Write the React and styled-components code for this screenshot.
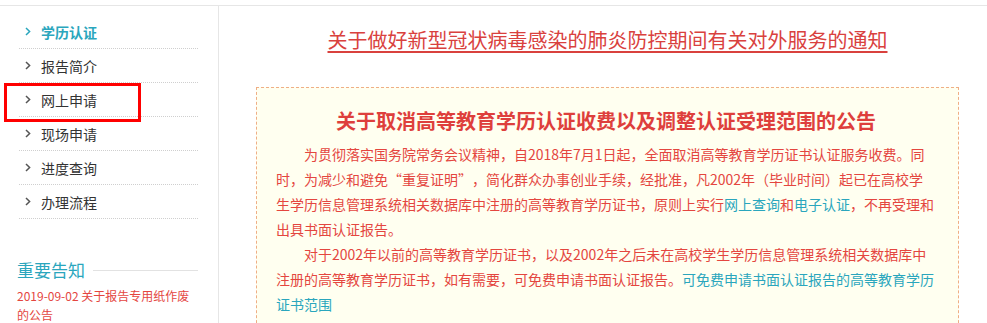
import React from 'react'
import styled, { createGlobalStyle } from 'styled-components'

const GlobalStyle = createGlobalStyle`
  body {
    margin: 0;
    background: #fff;
    font-family: "Noto Sans CJK SC", "Noto Sans", sans-serif;
    text-spacing-trim: space-all;
  }
`

let Page = styled.div`
  margin-top: 5px;
  border-top: 1px solid #e6e6e6;
  display: flex;
  height: 317px;
  overflow: hidden;
`

let Sidebar = styled.aside`
  width: 219px;
  flex-shrink: 0;
  border-right: 1px solid #e6e6e6;
  padding: 9px 20px 0 19px;
  box-sizing: border-box;
`

let NavList = styled.ul`
  list-style: none;
  margin: 0;
  padding: 0;
`

let NavItem = styled.li`
  position: relative;
  height: 34px;
  border-bottom: 1px dotted #cfcfcf;
  box-sizing: border-box;
  display: flex;
  align-items: center;
  gap: 10px;
  padding-left: 6px;
  font-size: 14px;
  color: ${(p) => (p.active ? '#2aa6bd' : '#333')};
  font-weight: ${(p) => (p.active ? 'bold' : 'normal')};
`

let Marker = styled.span`
  position: absolute;
  left: -15px;
  top: 0;
  width: 137px;
  height: 39px;
  border: 3px solid #f00;
  box-sizing: border-box;
  pointer-events: none;
`

let NoticeHead = styled.div`
  margin: 38px 0 0 -2px;
  display: flex;
  align-items: center;
  gap: 8px;
  font-size: 17px;
  line-height: 26px;
  color: #2aa6bd;

  &:after {
    content: '';
    flex: 1;
    height: 1px;
    background: #e2e2e2;
  }
`

let NoticeLink = styled.a`
  display: block;
  margin: 3px 0 0 -2px;
  width: 184px;
  font-size: 12px;
  line-height: 19px;
  color: #e4463f;
  text-decoration: none;
`

let Main = styled.main`
  flex: 1;
  padding: 19px 28px 0 37px;
`

let Title = styled.a`
  display: block;
  text-align: center;
  font-size: 20px;
  line-height: 30px;
  color: #d9413e;
  text-decoration: underline;
  text-underline-offset: 3px;
`

let Notice = styled.section`
  margin-top: 32px;
  border: 1px dashed #efae85;
  background: #fffff0;
  padding: 18px 22px 20px 19px;
`

let NoticeTitle = styled.h2`
  margin: 0;
  text-align: center;
  font-size: 20px;
  line-height: 30px;
  font-weight: bold;
  color: #de3f3c;
`

let Body = styled.div`
  margin-top: 6px;
`

let Para = styled.p`
  margin: 0;
  text-indent: 28px;
  font-size: 14px;
  line-height: 25px;
  color: #e4463f;

  a {
    color: #2aa6bd;
    text-decoration: none;
  }
`

// full-width curly quotes, as the reference font draws them
let Quote = styled.span`
  display: inline-block;
  width: 1em;
  text-indent: 0;
  text-align: ${(p) => (p.open ? 'right' : 'left')};
`

const ChevronWrap = styled.span`
  display: flex;
  color: ${(p) => (p.active ? '#2aa6bd' : '#555')};
`

const Chevron = ({ active }) => (
  <ChevronWrap active={active}>
    <svg width="6" height="9" viewBox="0 0 6 9">
      <path d="M1 1 L4.6 4.5 L1 8" fill="none" stroke="currentColor" strokeWidth="1.5" />
    </svg>
  </ChevronWrap>
)

const navItems = ['学历认证', '报告简介', '网上申请', '现场申请', '进度查询', '办理流程']

export default function App() {
  return (
    <>
      <GlobalStyle />
      <Page>
        <Sidebar>
          <NavList>
            {navItems.map((item, i) => (
              <NavItem key={item} active={i === 0 ? 1 : 0}>
                <Chevron active={i === 0 ? 1 : 0} />
                {item}
                {i === 2 && <Marker />}
              </NavItem>
            ))}
          </NavList>
          <NoticeHead>重要告知</NoticeHead>
          <NoticeLink href="#">2019-09-02 关于报告专用纸作废的公告</NoticeLink>
        </Sidebar>
        <Main>
          <Title href="#">关于做好新型冠状病毒感染的肺炎防控期间有关对外服务的通知</Title>
          <Notice>
            <NoticeTitle>关于取消高等教育学历认证收费以及调整认证受理范围的公告</NoticeTitle>
            <Body>
              <Para>
                为贯彻落实国务院常务会议精神，自2018年7月1日起，全面取消高等教育学历证书认证服务收费。同时，为减少和避免<Quote open={1}>“</Quote>重复证明<Quote>”</Quote>，简化群众办事创业手续，经批准，凡2002年（毕业时间）起已在高校学生学历信息管理系统相关数据库中注册的高等教育学历证书，原则上实行<a href="#">网上查询</a>和<a href="#">电子认证</a>，不再受理和出具书面认证报告。
              </Para>
              <Para>
                对于2002年以前的高等教育学历证书，以及2002年之后未在高校学生学历信息管理系统相关数据库中注册的高等教育学历证书，如有需要，可免费申请书面认证报告。<a href="#">可免费申请书面认证报告的高等教育学历证书范围</a>
              </Para>
            </Body>
          </Notice>
        </Main>
      </Page>
    </>
  )
}
